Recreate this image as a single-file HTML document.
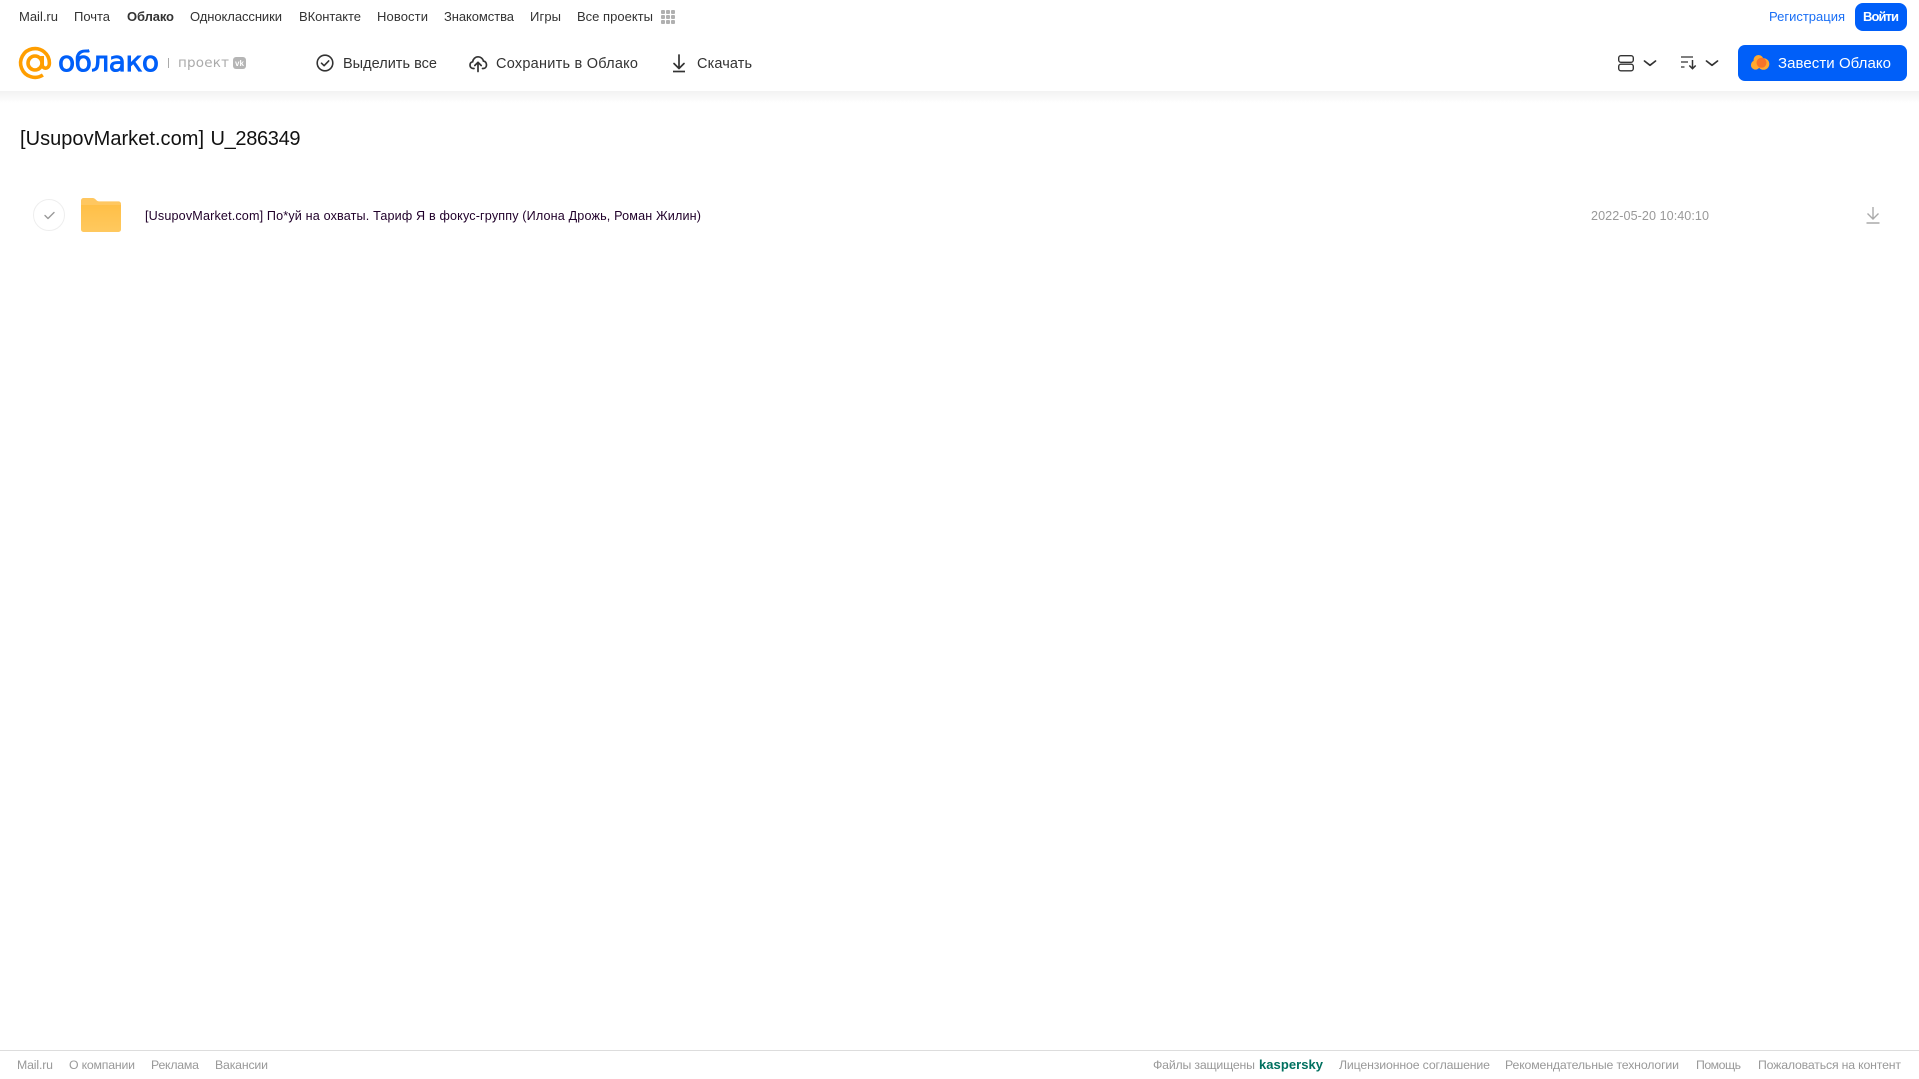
<!DOCTYPE html>
<html lang="ru">
<head>
<meta charset="utf-8">
<title>Облако</title>
<style>
html,body{margin:0;padding:0;background:#fff;width:1919px;height:1079px;overflow:hidden}
svg{position:absolute;left:0;top:0;display:block}
text{font-family:"Liberation Sans",sans-serif}
.n{font-size:13px;fill:#333}
.t{font-size:14.5px;fill:#333}
.f{font-size:12.3px;fill:#999}
</style>
</head>
<body>
<svg width="1919" height="1079" viewBox="0 0 1919 1079" xmlns="http://www.w3.org/2000/svg">
<defs>
<linearGradient id="sh" x1="0" y1="0" x2="0" y2="1"><stop offset="0" stop-color="#f2f2f2"/><stop offset="1" stop-color="#fff"/></linearGradient>
<linearGradient id="fo" x1="0" y1="0" x2="0" y2="1"><stop offset="0" stop-color="#ffbf47"/><stop offset="1" stop-color="#ffc95f"/></linearGradient>
</defs>
<rect x="0" y="91" width="1919" height="12" fill="url(#sh)"/>

<!-- top nav -->
<text class="n" x="19" y="21" textLength="39">Mail.ru</text>
<text class="n" x="74" y="21" textLength="36">Почта</text>
<text class="n" x="127" y="21" textLength="47" style="fill:#333;font-weight:700">Облако</text>
<text class="n" x="190" y="21" textLength="92">Одноклассники</text>
<text class="n" x="299" y="21" textLength="62">ВКонтакте</text>
<text class="n" x="377" y="21" textLength="51">Новости</text>
<text class="n" x="444" y="21" textLength="70">Знакомства</text>
<text class="n" x="530" y="21" textLength="31">Игры</text>
<text class="n" x="577" y="21" textLength="76">Все проекты</text>
<g fill="#b0b0b0">
<rect x="661" y="10" width="4" height="4" rx="1"/><rect x="666" y="10" width="4" height="4" rx="1"/><rect x="671" y="10" width="4" height="4" rx="1"/>
<rect x="661" y="15" width="4" height="4" rx="1"/><rect x="666" y="15" width="4" height="4" rx="1"/><rect x="671" y="15" width="4" height="4" rx="1"/>
<rect x="661" y="20" width="4" height="4" rx="1"/><rect x="666" y="20" width="4" height="4" rx="1"/><rect x="671" y="20" width="4" height="4" rx="1"/>
</g>
<text x="1769" y="21" textLength="76" style="font-size:13px;fill:#1a6ff5">Регистрация</text>
<rect x="1855" y="3" width="52" height="28" rx="8" fill="#005ff9"/>
<text x="1863" y="21" textLength="36" style="font-size:13px;fill:#fff;font-weight:700">Войти</text>

<!-- logo -->
<g fill="none" stroke="#ff9e00" stroke-width="3.600">
<circle cx="35" cy="63" r="7"/>
<path d="M42.200 56v8.500c0 5 7.200 5.200 7.200-1.500a14.400 14.400 0 1 0-6.500 12"/>
</g>
<text x="58" y="71" textLength="101" style="font-family:'DejaVu Sans',sans-serif;font-size:28px;fill:#005ff9;stroke:#005ff9;stroke-width:.9">облако</text>
<rect x="168" y="58" width="1" height="10" fill="#aaa"/>
<text x="178" y="67" textLength="51" style="font-family:'DejaVu Sans',sans-serif;font-size:13.500px;fill:#aaa">проект</text>
<rect x="233" y="57" width="13" height="12" rx="3" fill="#b5b5b5"/>
<text x="235" y="66" textLength="9" style="font-size:8px;fill:#fff;font-weight:700">vk</text>

<!-- toolbar -->
<circle cx="325" cy="63" r="7.800" fill="none" stroke="#333" stroke-width="1.600"/>
<path d="M321.500 63.200l2.600 2.500 4.600-4.800" fill="none" stroke="#333" stroke-width="1.600" stroke-linecap="round" stroke-linejoin="round"/>
<text class="t" x="343" y="68" textLength="94">Выделить все</text>

<path d="M474 68.500h-.6c-2 0-3.400-1.500-3.400-3.400 0-1.700 1.100-3 2.600-3.300.4-2.800 2.700-5 5.500-5 2.600 0 4.700 1.800 5.300 4.200 1.900.3 3.100 1.900 3.100 3.900 0 2.100-1.300 3.600-3.300 3.600h-.7" fill="none" stroke="#333" stroke-width="1.700" stroke-linecap="round"/>
<path d="M478 71.500v-9M474.800 65.500l3.200-3.200 3.200 3.200" fill="none" stroke="#333" stroke-width="1.700" stroke-linecap="round" stroke-linejoin="round"/>
<text class="t" x="496" y="68" textLength="142">Сохранить в Облако</text>

<path d="M679 55v13M674 63.500l5 5 5-5" fill="none" stroke="#333" stroke-width="1.700" stroke-linecap="round" stroke-linejoin="round"/>
<path d="M673 71.500h12" fill="none" stroke="#333" stroke-width="1.700"/>
<text class="t" x="697" y="68" textLength="55">Скачать</text>

<!-- view + sort -->
<g fill="none" stroke="#333" stroke-width="1.400">
<rect x="1618.700" y="55.700" width="14.600" height="6.600" rx="2.200"/>
<rect x="1618.700" y="64.200" width="14.600" height="6.600" rx="2.200"/>
<path d="M1644.500 61l5.500 4.300 5.500-4.300M1706.500 61l5.500 4.300 5.500-4.300" stroke-width="1.700" stroke-linecap="round" stroke-linejoin="round"/>
<path d="M1681 57h12M1681 62h7M1681 67h3.500" stroke-width="1.300"/>
<path d="M1692.500 60v8.500M1689.300 65.500l3.200 3.200 3.200-3.200" stroke-width="1.500"/>
</g>

<!-- CTA -->
<rect x="1738" y="45" width="169" height="36" rx="7" fill="#005ff9"/>
<g fill="#ffa930"><circle cx="1758.500" cy="60" r="5"/><circle cx="1755.500" cy="65" r="4.600"/><circle cx="1763.500" cy="64" r="5.800"/></g>
<circle cx="1761.500" cy="62.800" r="5" fill="#f7742a"/>
<text x="1778" y="68" textLength="113" style="font-size:15px;fill:#fff">Завести Облако</text>

<!-- heading -->
<text x="20" y="145" textLength="184" style="font-size:20px;fill:#111">[UsupovMarket.com]</text>
<text x="210.500" y="145" textLength="90" style="font-size:20px;fill:#111">U_286349</text>

<!-- row -->
<circle cx="49" cy="215" r="15.500" fill="#fff" stroke="#eeeeee" stroke-width="1"/>
<path d="M45 215.500l3 3 6-6" fill="none" stroke="#999" stroke-width="1.400" stroke-linecap="round" stroke-linejoin="round"/>
<path d="M81 200.500a2.500 2.500 0 0 1 2.500-2.500h8.500c2.400 0 3.200 1 4.200 2 .9.900 1.500 1.400 3 1.400h19.300a2.500 2.500 0 0 1 2.500 2.500v3H81z" fill="#ffc760"/>
<path d="M81 205h40v24.500a2.500 2.500 0 0 1-2.500 2.500h-35a2.500 2.500 0 0 1-2.500-2.500z" fill="url(#fo)"/>
<text x="145" y="220" textLength="556" style="font-size:12.600px;fill:#20002a">[UsupovMarket.com] По*уй на охваты. Тариф Я в фокус-группу (Илона Дрожь, Роман Жилин)</text>
<text x="1591" y="220" textLength="118" style="font-size:12.600px;fill:#999">2022-05-20 10:40:10</text>
<path d="M1873 207v11.500M1867.500 213.500l5.500 5.500 5.500-5.500M1866.500 223h13" fill="none" stroke="#aaa" stroke-width="1.400"/>

<!-- footer -->
<rect x="0" y="1050" width="1919" height="1" fill="#ddd"/>
<text class="f" x="17" y="1069" textLength="36">Mail.ru</text>
<text class="f" x="69" y="1069" textLength="66">О компании</text>
<text class="f" x="151" y="1069" textLength="48">Реклама</text>
<text class="f" x="215" y="1069" textLength="53">Вакансии</text>
<text class="f" x="1153" y="1069" textLength="102">Файлы защищены</text>
<text x="1259" y="1069" textLength="64" style="font-size:13px;font-weight:700;fill:#00705f">kaspersky</text>
<text class="f" x="1339" y="1069" textLength="151">Лицензионное соглашение</text>
<text class="f" x="1505" y="1069" textLength="174">Рекомендательные технологии</text>
<text class="f" x="1696" y="1069" textLength="45">Помощь</text>
<text class="f" x="1758" y="1069" textLength="143">Пожаловаться на контент</text>
</svg>
</body>
</html>
